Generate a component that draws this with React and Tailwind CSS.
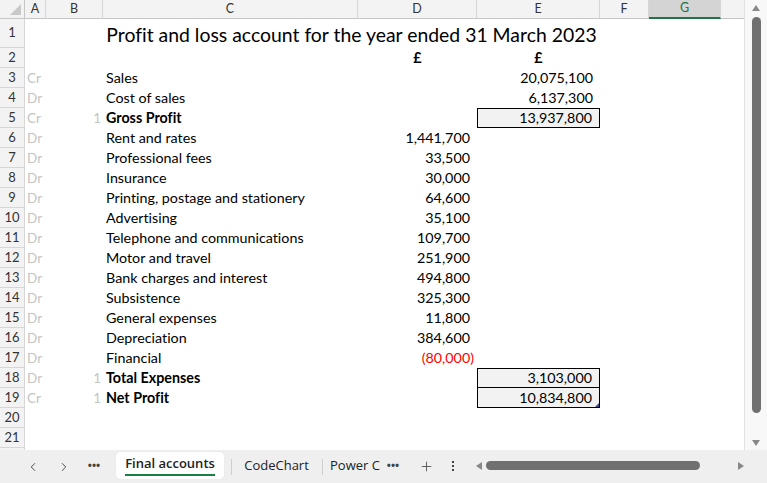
import React from "react";
import { ChevronLeft, ChevronRight, Plus } from "lucide-react";

const rows = [
  { n: 3, a: "Cr", c: "Sales", e: "20,075,100" },
  { n: 4, a: "Dr", c: "Cost of sales", e: "6,137,300" },
  { n: 5, a: "Cr", b: "1", c: "Gross Profit", bold: true, e: "13,937,800", box: "full" },
  { n: 6, a: "Dr", c: "Rent and rates", d: "1,441,700" },
  { n: 7, a: "Dr", c: "Professional fees", d: "33,500" },
  { n: 8, a: "Dr", c: "Insurance", d: "30,000" },
  { n: 9, a: "Dr", c: "Printing, postage and stationery", d: "64,600" },
  { n: 10, a: "Dr", c: "Advertising", d: "35,100" },
  { n: 11, a: "Dr", c: "Telephone and communications", d: "109,700" },
  { n: 12, a: "Dr", c: "Motor and travel", d: "251,900" },
  { n: 13, a: "Dr", c: "Bank charges and interest", d: "494,800" },
  { n: 14, a: "Dr", c: "Subsistence", d: "325,300" },
  { n: 15, a: "Dr", c: "General expenses", d: "11,800" },
  { n: 16, a: "Dr", c: "Depreciation", d: "384,600" },
  { n: 17, a: "Dr", c: "Financial", d: "(80,000)", neg: true },
  { n: 18, a: "Dr", b: "1", c: "Total Expenses", bold: true, e: "3,103,000", box: "full" },
  { n: 19, a: "Cr", b: "1", c: "Net Profit", bold: true, e: "10,834,800", box: "bottom", handle: true },
];

function RowHead({ n, h }) {
  return (
    <div
      className={`w-[25px] shrink-0 ${h} bg-[#f3f3f3] border-r border-b border-[#d6d6d6] flex items-center justify-center text-[13px] text-[#333] font-[Lato,sans-serif] box-border`}
    >
      {n}
    </div>
  );
}

function ColHead({ w, label, sel }) {
  return (
    <div
      className={`${w} shrink-0 h-full flex items-center justify-center text-[12.5px] font-[Lato,sans-serif] box-border border-r border-[#d6d6d6] ${
        sel
          ? "bg-[#d4d4d4] text-[#217346] border-b-2 border-b-[#217346]"
          : "bg-[#f3f3f3] text-[#333] border-b border-b-[#c6c6c6]"
      }`}
    >
      {label}
    </div>
  );
}

export default function App() {
  return (
    <div className="w-[767px] h-[483px] overflow-hidden bg-white flex flex-col font-[Lato,sans-serif] text-[14.3px] text-black [font-variant-ligatures:none]">
      <div className="flex h-[450px] shrink-0">
        {/* grid */}
        <div className="w-[745px] shrink-0 flex flex-col border-r border-[#e2e2e2] box-border">
          {/* column headers */}
          <div className="flex h-[19px] shrink-0">
            <div className="w-[25px] shrink-0 h-full bg-[#f3f3f3] border-r border-b border-[#c6c6c6] box-border relative">
              <div className="absolute right-[3px] bottom-[3px] w-0 h-0 border-l-[11px] border-l-transparent border-b-[11px] border-b-[#c9c9c9]" />
            </div>
            <ColHead w="w-[21px]" label="A" />
            <ColHead w="w-[57px]" label="B" />
            <ColHead w="w-[255px]" label="C" />
            <ColHead w="w-[119px]" label="D" />
            <ColHead w="w-[123px]" label="E" />
            <ColHead w="w-[49px]" label="F" />
            <ColHead w="w-[72px]" label="G" sel />
            <div className="flex-1 h-full bg-[#f3f3f3] border-b border-[#c6c6c6] box-border" />
          </div>

          {/* row 1 */}
          <div className="flex h-[29px] shrink-0">
            <RowHead n={1} h="h-[29px]" />
            <div className="w-[21px] shrink-0" />
            <div className="w-[57px] shrink-0" />
            <div className="w-[497px] shrink-0 flex items-center justify-center text-[19.4px] leading-none pt-[3px] whitespace-nowrap">
              Profit and loss account for the year ended 31 March 2023
            </div>
          </div>

          {/* row 2 */}
          <div className="flex h-[20px] shrink-0">
            <RowHead n={2} h="h-[20px]" />
            <div className="w-[21px] shrink-0" />
            <div className="w-[57px] shrink-0" />
            <div className="w-[255px] shrink-0" />
            <div className="w-[119px] shrink-0 flex items-center justify-center font-bold">£</div>
            <div className="w-[123px] shrink-0 flex items-center justify-center font-bold">£</div>
          </div>

          {rows.map((r) => (
            <div key={r.n} className="flex h-[20px] shrink-0">
              <RowHead n={r.n} h="h-[20px]" />
              <div className="w-[21px] shrink-0 flex items-center pl-[2px] text-[#c4c4c4] text-[13.5px]">{r.a}</div>
              <div className="w-[57px] shrink-0 flex items-center justify-end pr-[2px] text-[#c4c4c4] text-[13.5px]">{r.b}</div>
              <div className={`w-[255px] shrink-0 flex items-center pl-[3px] whitespace-nowrap ${r.bold ? "font-bold" : ""}`}>{r.c}</div>
              <div
                className={`w-[119px] shrink-0 flex items-center justify-end ${r.neg ? "pr-[3px] text-[#ff0000]" : "pr-[7px]"}`}
              >
                {r.d}
              </div>
              <div
                className={`w-[123px] shrink-0 flex items-center justify-end pr-[7px] box-border relative ${
                  r.box === "full"
                    ? "border border-black bg-[#f2f2f2]"
                    : r.box === "bottom"
                    ? "border-l border-r border-b border-black bg-[#f2f2f2]"
                    : ""
                }`}
              >
                {r.e}
                {r.handle && (
                  <div className="absolute right-0 bottom-0 w-0 h-0 border-l-[4px] border-l-transparent border-b-[4px] border-b-[#3b4a8c]" />
                )}
              </div>
            </div>
          ))}

          {/* rows 20, 21 */}
          {[20, 21].map((n) => (
            <div key={n} className="flex h-[20px] shrink-0">
              <RowHead n={n} h="h-[20px]" />
            </div>
          ))}
          <div className="flex-1 flex">
            <div className="w-[25px] shrink-0 bg-[#f3f3f3] border-r border-[#d6d6d6]" />
          </div>
        </div>

        {/* vertical scrollbar */}
        <div className="w-[22px] shrink-0 bg-[#f8f8f8] flex flex-col items-center pt-[5px] pb-[4px]">
          <div className="w-0 h-0 border-l-[4px] border-l-transparent border-r-[4px] border-r-transparent border-b-[6px] border-b-[#888]" />
          <div className="w-[9px] h-[396px] mt-[6px] rounded-full bg-[#707070]" />
          <div className="flex-1" />
          <div className="w-0 h-0 border-l-[4px] border-l-transparent border-r-[4px] border-r-transparent border-t-[6px] border-t-[#888]" />
        </div>
      </div>

      {/* tab bar */}
      <div className="flex-1 bg-[#efefef] flex items-stretch font-['Open_Sans',sans-serif] text-[13px] text-[#222]">
        <div className="w-[25px] shrink-0" />
        <div className="w-[16px] flex items-center justify-center text-[#444]">
          <ChevronLeft size={14} strokeWidth={1.6} />
        </div>
        <div className="w-[15px]" />
        <div className="w-[16px] flex items-center justify-center text-[#444]">
          <ChevronRight size={14} strokeWidth={1.6} />
        </div>
        <div className="w-[14px]" />
        <div className="w-[16px] flex items-center justify-center text-[#444] font-bold text-[11px] pb-[2px]">•••</div>
        <div className="w-[14px]" />
        <div className="w-[108px] mt-[2px] mb-[4px] bg-white rounded-[4px] flex flex-col items-center justify-center shadow-[0_0_1px_rgba(0,0,0,0.15)]">
          <span className="font-semibold leading-none pt-[2px]">Final accounts</span>
          <span className="mt-[4px] w-[90px] h-[2px] bg-[#1a7f43]" />
        </div>
        <div className="w-[14px] flex items-center justify-center">
          <div className="w-px h-[16px] bg-[#cfcfcf]" />
        </div>
        <div className="w-[77px] flex items-center justify-center pb-[2px]">CodeChart</div>
        <div className="w-[14px] flex items-center justify-center">
          <div className="w-px h-[16px] bg-[#cfcfcf]" />
        </div>
        <div className="w-[56px] flex items-center pl-[1px] pb-[2px] whitespace-nowrap">Power C</div>
        <div className="w-[16px] flex items-center justify-center text-[#444] font-bold text-[11px] pb-[2px]">•••</div>
        <div className="w-[17px]" />
        <div className="w-[16px] flex items-center justify-center text-[#444]">
          <Plus size={15} strokeWidth={1.3} />
        </div>
        <div className="w-[16px]" />
        <div className="w-[6px] flex flex-col items-center justify-center gap-[2px] pb-[2px]">
          <span className="w-[2px] h-[2px] bg-[#444]" />
          <span className="w-[2px] h-[2px] bg-[#444]" />
          <span className="w-[2px] h-[2px] bg-[#444]" />
        </div>
        <div className="w-[20px]" />
        <div className="flex-1 flex items-center pb-[2px]">
          <div className="w-0 h-0 border-t-[4px] border-t-transparent border-b-[4px] border-b-transparent border-r-[6px] border-r-[#888]" />
          <div className="ml-[4px] w-[214px] h-[9px] rounded-full bg-[#707070]" />
          <div className="flex-1" />
          <div className="w-0 h-0 border-t-[4px] border-t-transparent border-b-[4px] border-b-transparent border-l-[6px] border-l-[#888]" />
          <div className="w-[23px]" />
        </div>
      </div>
    </div>
  );
}
